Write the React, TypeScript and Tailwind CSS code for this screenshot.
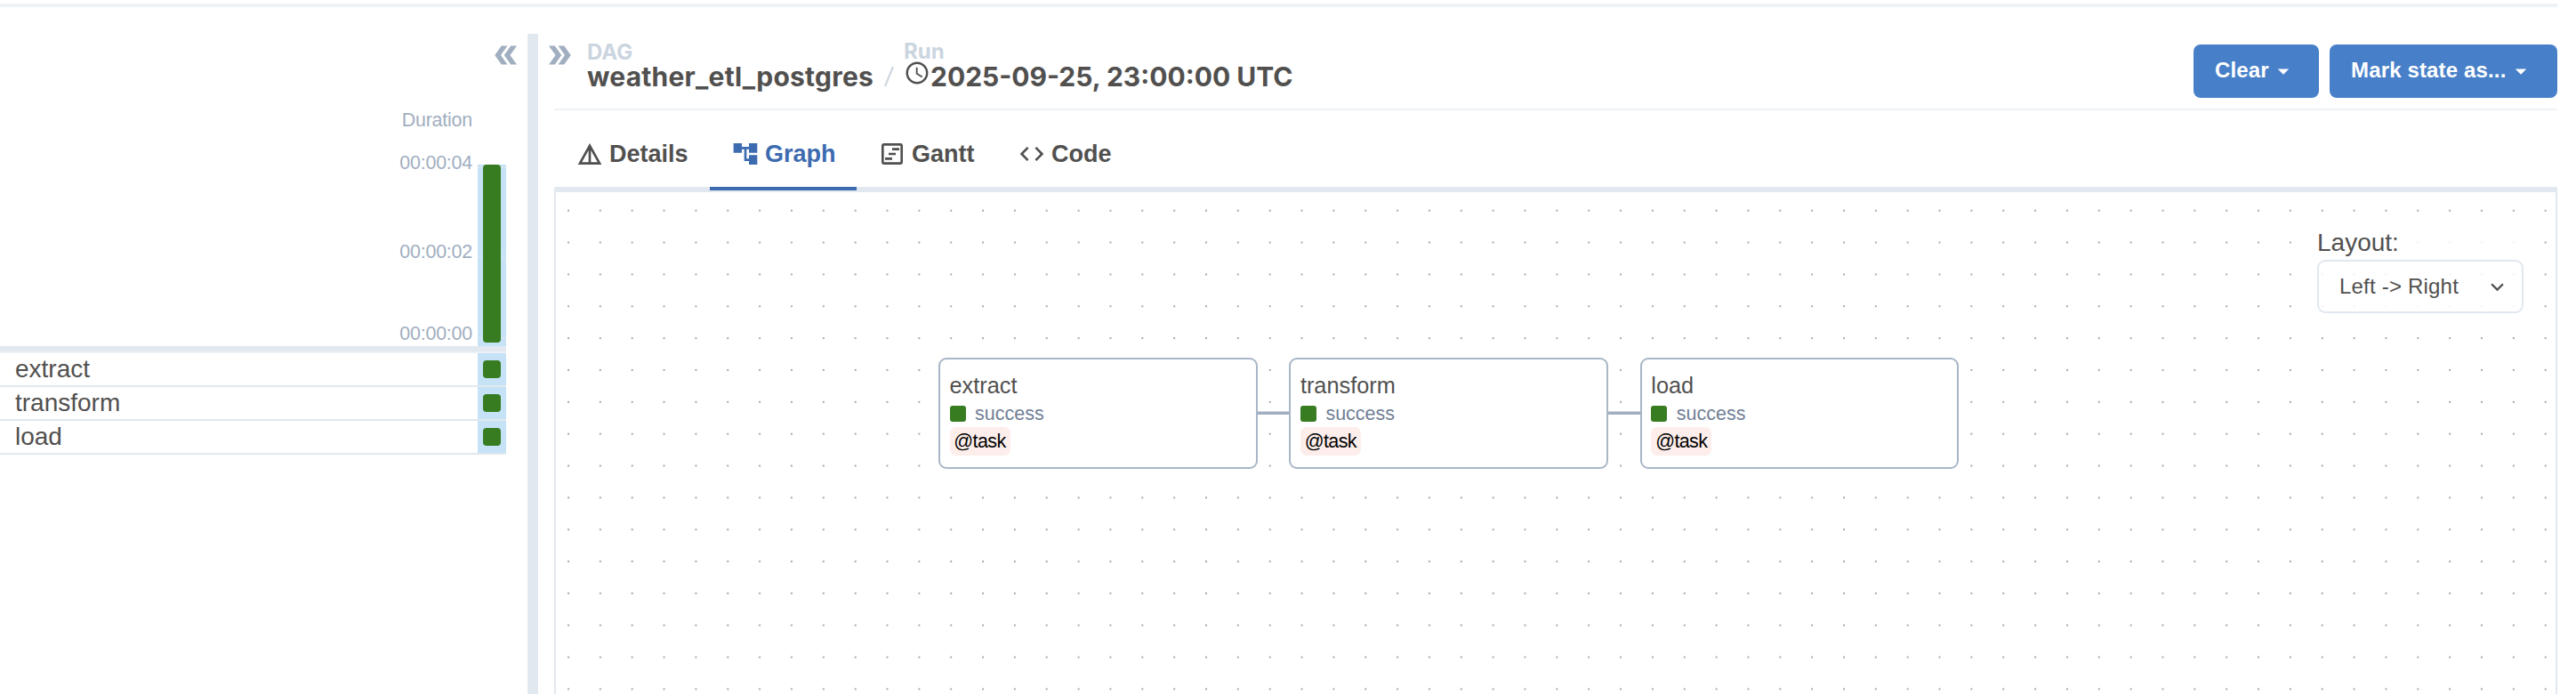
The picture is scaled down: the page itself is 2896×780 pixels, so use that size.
import type { ReactNode } from "react";
import {
  MdAccountTree,
  MdArrowDropDown,
  MdCode,
  MdDetails,
  MdDoubleArrow,
  MdExpandMore,
  MdOutlineSchedule,
  MdOutlineViewTimeline,
} from "react-icons/md";

const tasks = ["extract", "transform", "load"];

function TaskGrid() {
  return (
    <aside className="flex w-[593px] shrink-0 flex-col">
      <div className="flex h-[84px] justify-end pt-[6px] pr-[6px] text-[#a0aec0]">
        <MdDoubleArrow className="size-[36px] rotate-180" />
      </div>
      <div className="flex h-[273px] w-[569px] border-b-[6px] border-[#e2e8f0]">
        <div className="w-[531px] pt-px text-right text-[21.4px] leading-[24px] tracking-[-0.2px] text-[#a0aec0]">
          <div>Duration</div>
          <div className="mt-[24px]">00:00:04</div>
          <div className="mt-[76px]">00:00:02</div>
          <div className="mt-[68px]">00:00:00</div>
        </div>
        <div className="mt-[63px] ml-[6px] flex h-[204px] w-[32px] flex-col bg-[#c5e2f6]">
          <div className="mt-[2px] h-[2px] bg-[#d4e4f2]" />
          <div className="mt-[98px] h-[2px] bg-[#d4e4f2]" />
          <div className="mt-[90px] h-[2px] bg-[#d4e4f2]" />
          <div className="-mt-[196px] h-[200px] w-[20px] shrink-0 self-center rounded-[4px] bg-[#387c22]" />
        </div>
      </div>
      <div className="h-[2px] w-[569px] bg-[#edf2f7]" />
      {tasks.map((task) => (
        <div key={task} className="flex h-[38px] w-[569px] border-b-2 border-[#e2e8f0]">
          <div className="w-[537px] pl-[17px] text-[28px] leading-[36px]">{task}</div>
          <div className="flex w-[32px] items-center justify-center bg-[#c5e2f6]">
            <div className="size-[20px] rounded-[4px] bg-[#387c22]" />
          </div>
        </div>
      ))}
    </aside>
  );
}

function Tab({ icon, label, className }: { icon: ReactNode; label: string; className: string }) {
  return (
    <div className={`flex h-[90px] shrink-0 items-center gap-[6px] border-b-4 pt-[12px] pl-[24px] ${className}`}>
      {icon}
      <span>{label}</span>
    </div>
  );
}

function ActionButton({ label, className }: { label: string; className: string }) {
  return (
    <button
      className={`flex h-[60px] items-center rounded-[8px] bg-[#4780c8] pb-[2px] pl-[24px] text-[24px] font-bold tracking-[0.15px] text-white ${className}`}
    >
      <span>{label}</span>
      <MdArrowDropDown className="mt-[2px] ml-px size-[30px]" />
    </button>
  );
}

function Header() {
  return (
    <header className="flex h-[86px] w-[2252px] justify-between border-b-2 border-[#edf2f7]">
      <div className="ml-[37px] flex font-['Inter',sans-serif] font-bold">
        <div className="pt-[6px]">
          <div className="h-[24px] text-[24px] leading-[29px] text-[#cbd5e0]">DAG</div>
          <div className="text-[30px] leading-[36px] tracking-[0.22px]">weather_etl_postgres</div>
        </div>
        <svg className="mt-[36px] ml-[12px] h-[24px] w-[11px]" viewBox="0 0 11 24" fill="none" stroke="#cbd5e0" strokeWidth="2">
          <path d="M10 1 1 23" />
        </svg>
        <div className="ml-[11px] pt-[5px]">
          <div className="h-[25px] text-[24px] leading-[29px] text-[#cbd5e0]">Run</div>
          <div className="flex text-[30px] leading-[36px]">
            <MdOutlineSchedule className="-mt-px size-[30px]" />
            <span>2025-09-25, 23:00:00 UTC</span>
          </div>
        </div>
      </div>
      <div className="flex gap-[12px] pt-[12px]">
        <ActionButton label="Clear" className="w-[141px]" />
        <ActionButton label="Mark state as..." className="w-[256px]" />
      </div>
    </header>
  );
}

function Tabs() {
  return (
    <nav className="flex h-[92px] w-[2252px] border-b-[6px] border-[#e2e8f0] text-[27px] font-bold">
      <Tab icon={<MdDetails className="size-[32px]" />} label="Details" className="w-[175px] border-transparent" />
      <Tab icon={<MdAccountTree className="size-[32px]" />} label="Graph" className="w-[165px] border-[#3d6bb0] text-[#3d6bb0]" />
      <Tab icon={<MdOutlineViewTimeline className="size-[32px]" />} label="Gantt" className="w-[157px] border-transparent" />
      <Tab icon={<MdCode className="size-[32px]" />} label="Code" className="w-[154px] border-transparent" />
    </nav>
  );
}

function TaskNode({ name, className }: { name: string; className: string }) {
  return (
    <div
      className={`absolute top-[185.5px] h-[125px] w-[358.5px] rounded-[9px] border-2 border-[#a9b6c7] bg-white pt-[14px] pl-[10.5px] ${className}`}
    >
      <div className="text-[25.3px] leading-[30px]">{name}</div>
      <div className="mt-[4.5px] flex h-[26px] items-center gap-[10.5px]">
        <div className="size-[18px] rounded-[3px] bg-[#387c22]" />
        <div className="text-[21.5px] leading-[26px] text-[#718096]">success</div>
      </div>
      <div className="mt-[2px] flex h-[32px] w-[68px] items-center justify-center rounded-[7px] bg-[#fdeeeb] text-[21.5px] tracking-[-0.6px] text-black">
        @task
      </div>
    </div>
  );
}

function Canvas() {
  return (
    <section className="relative h-[564px] w-[2252px] overflow-hidden border-x-2 border-[#e2e8f0]">
      <svg className="absolute inset-0 size-full">
        <defs>
          <pattern id="dots" x="13" y="19.7" width="35.85" height="35.85" patternUnits="userSpaceOnUse">
            <circle cx="1" cy="1" r="0.95" fill="#85858a" />
          </pattern>
        </defs>
        <rect width="100%" height="100%" fill="url(#dots)" />
        <path d="M788 248.3h37M1182.500 248.3h37" stroke="#a0aec0" strokeWidth="3.5" />
      </svg>
      <TaskNode name="extract" className="left-[430px]" />
      <TaskNode name="transform" className="left-[824.4px]" />
      <TaskNode name="load" className="left-[1218.8px]" />
      <div className="absolute top-[40px] left-[1980px] w-[232px] bg-white/85">
        <div className="h-[36px] text-[28px] leading-[34px]">Layout:</div>
        <div className="flex h-[60px] items-center justify-between rounded-[9px] border-2 border-[#e2e8f0] pr-[13px] pl-[23px]">
          <span className="text-[24px] tracking-[0.2px]">{"Left -> Right"}</span>
          <MdExpandMore className="size-[29px]" />
        </div>
      </div>
    </section>
  );
}

export default function App() {
  return (
    <div className="h-[780px] w-[2896px] overflow-hidden bg-white pt-[4px] font-['Liberation_Sans',sans-serif] text-[#51504f]">
      <div className="h-[4px] w-[2875px] bg-[#edf2f7]" />
      <div className="flex pt-[30px]">
        <TaskGrid />
        <div className="h-[742px] w-[12px] shrink-0 bg-[#e2e8f0]" />
        <div className="w-[18px] shrink-0 pt-[6px] pl-[6px] text-[#a0aec0]">
          <MdDoubleArrow className="size-[36px]" />
        </div>
        <main className="flex flex-col">
          <Header />
          <Tabs />
          <Canvas />
        </main>
      </div>
    </div>
  );
}
